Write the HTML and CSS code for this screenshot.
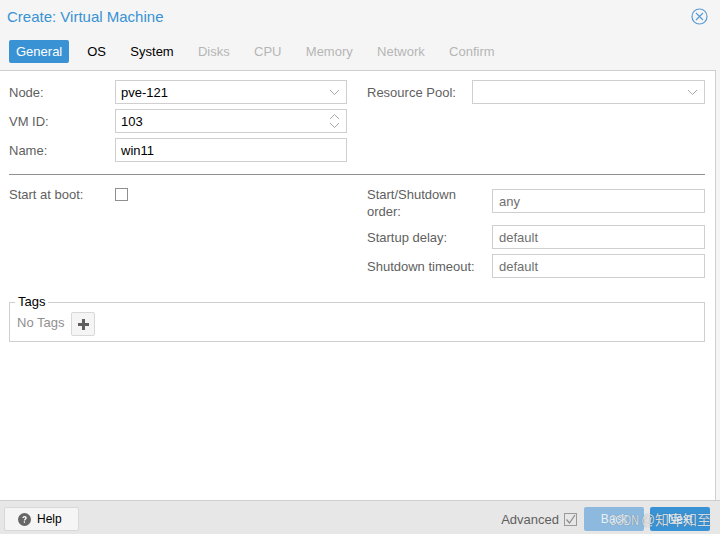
FILE: index.html
```html
<!DOCTYPE html>
<html lang="en">
  <head>
    <meta charset="UTF-8" />
    <meta name="viewport" content="width=device-width, initial-scale=1.0" />
    <title>Create: Virtual Machine</title>
    <link rel="stylesheet" href="styles.css">
  </head>
  <body>
    <div class="window">
      <div class="window-head">
        <div class="title-row">
          <span class="window-title">Create: Virtual Machine</span>
          <svg class="close-icon" width="17" height="17" viewBox="0 0 17 17" fill="none" stroke="#5b9bd5">
            <circle cx="8.5" cy="8.5" r="7.5" stroke-width="1.2"/>
            <path d="M5 5l7 7M12 5l-7 7" stroke-width="1.2"/>
          </svg>
        </div>
        <div class="tabs">
          <span class="tab active">General</span>
          <span class="tab">OS</span>
          <span class="tab">System</span>
          <span class="tab disabled">Disks</span>
          <span class="tab disabled">CPU</span>
          <span class="tab disabled">Memory</span>
          <span class="tab disabled">Network</span>
          <span class="tab disabled">Confirm</span>
        </div>
      </div>

      <div class="window-body">
        <div class="form-top">
          <div class="form-col">
            <div class="field">
              <label class="field-label">Node:</label>
              <div class="input">
                <span>pve-121</span>
                <svg class="chevron" width="11" height="7" viewBox="0 0 11 7" fill="none" stroke="#a8a8a8"><path d="M1 1l4.5 4.5L10 1"/></svg>
              </div>
            </div>
            <div class="field">
              <label class="field-label">VM ID:</label>
              <div class="input">
                <span>103</span>
                <svg class="spinner" width="11" height="16" viewBox="0 0 11 16" fill="none" stroke="#a8a8a8"><path d="M1 6l4.5-4.5L10 6M1 10l4.5 4.5L10 10"/></svg>
              </div>
            </div>
            <div class="field">
              <label class="field-label">Name:</label>
              <div class="input"><span>win11</span></div>
            </div>
          </div>
          <div class="form-col">
            <div class="field">
              <label class="field-label">Resource Pool:</label>
              <div class="input">
                <span></span>
                <svg class="chevron" width="11" height="7" viewBox="0 0 11 7" fill="none" stroke="#a8a8a8"><path d="M1 1l4.5 4.5L10 1"/></svg>
              </div>
            </div>
          </div>
        </div>

        <div class="divider"></div>

        <div class="form-bottom">
          <div class="form-col">
            <div class="field boot-field">
              <label class="field-label">Start at boot:</label>
              <span class="checkbox"></span>
            </div>
          </div>
          <div class="form-col">
            <div class="field order-field">
              <label class="field-label wrap">Start/Shutdown order:</label>
              <div class="input placeholder"><span>any</span></div>
            </div>
            <div class="field">
              <label class="field-label">Startup delay:</label>
              <div class="input placeholder"><span>default</span></div>
            </div>
            <div class="field">
              <label class="field-label">Shutdown timeout:</label>
              <div class="input placeholder"><span>default</span></div>
            </div>
          </div>
        </div>

        <div class="tags-box">
          <span class="tags-legend">Tags</span>
          <span class="no-tags">No Tags</span>
          <span class="add-btn">
            <svg width="11" height="11" viewBox="0 0 11 11" fill="#5f5f5f"><path d="M4 0h3v4h4v3H7v4H4V7H0V4h4z"/></svg>
          </span>
        </div>
      </div>

      <div class="toolbar">
        <span class="help-btn">
          <svg width="13" height="13" viewBox="0 0 13 13">
            <circle cx="6.5" cy="6.5" r="6.5" fill="#666"/>
            <path d="M4.4 5.1c0-1.3 1-2 2.2-2s2.1.7 2.1 1.8c0 1.5-1.6 1.5-1.6 2.700H5.800c0-1.800 1.500-1.900 1.500-2.700 0-.4-.3-.7-.8-.7s-.8.3-.8.900z" fill="#fff"/>
            <rect x="5.800" y="8.400" width="1.300" height="1.400" fill="#fff"/>
          </svg>
          Help
        </span>
        <div class="toolbar-right">
          <span class="advanced-label">Advanced</span>
          <span class="checkbox checked">
            <svg width="13" height="13" viewBox="0 0 13 13" fill="none" stroke="#8a8a8a" stroke-width="1.200"><path d="M2.500 6.500l3 3.500 5.500-8"/></svg>
          </span>
          <span class="wiz-btn back">Back</span>
          <span class="wiz-btn next">Next</span>
        </div>
      </div>

      <span class="watermark"><span class="watermark-latin">CSDN</span> @知卑知至</span>
    </div>
  </body>
</html>
```

FILE: styles.css
```css
* {
  box-sizing: border-box;
}

body {
  margin: 0;
  font-family: "Liberation Sans", Arial, sans-serif;
  font-size: 13px;
  color: #000;
  background: #f5f5f5;
}

.window {
  position: relative;
  width: 720px;
  height: 534px;
  display: flex;
  flex-direction: column;
  overflow: hidden;
}

.window-head {
  height: 70px;
  background: #f5f5f5;
  padding: 0 9px 0 7px;
}

.title-row {
  height: 40px;
  display: flex;
  justify-content: space-between;
  align-items: center;
  padding-bottom: 8px;
}

.window-title {
  font-size: 15px;
  color: #3892d4;
}

.close-icon {
  margin-right: 3px;
}

.tabs {
  display: flex;
  padding-left: 2px;
}

.tab {
  height: 23px;
  line-height: 23px;
  padding: 0 6px;
  margin-right: 12.3px;
  border-radius: 2px;
  font-size: 13px;
}

.tab.active {
  padding: 0 7px;
  background: #3892d4;
  color: #fff;
  margin-right: 12px;
}

.tab.disabled {
  color: #b5b5b5;
}

.window-body {
  flex: 1;
  margin-right: 4px;
  background: #fff;
  border-top: 1px solid #cfcfcf;
  border-right: 1px solid #cfcfcf;
  padding: 9px 10px 0 9px;
}

.form-top,
.form-bottom {
  display: grid;
  grid-template-columns: 338px 338px;
  column-gap: 20px;
}

.form-col {
  display: flex;
  flex-direction: column;
  gap: 5px;
}

.field {
  display: flex;
  align-items: center;
  min-height: 24px;
}

.field-label {
  width: 106px;
  flex-shrink: 0;
  color: #5f5f5f;
  line-height: 17px;
}

.form-bottom .form-col + .form-col .field-label {
  width: 125px;
}

.form-top .form-col + .form-col .field-label {
  width: 105px;
}

.field-label.wrap {
  margin-top: -2px;
}

.input {
  flex: 1;
  height: 24px;
  border: 1px solid #cfcfcf;
  background: #fff;
  padding: 0 6px;
  display: flex;
  align-items: center;
  justify-content: space-between;
  font-size: 13px;
  color: #000;
}

.form-top .input {
  padding-left: 5px;
}

.input.placeholder {
  color: #6f6f6f;
}

.divider {
  height: 1px;
  margin-top: 12px;
  background: #909090;
}

.form-bottom {
  margin-top: 13px;
}

.boot-field {
  align-items: flex-start;
}

.boot-field .field-label {
  margin-top: -2px;
}

.order-field {
  height: 32px;
  align-items: flex-start;
}

.order-field .input {
  margin-top: 1px;
}

.checkbox {
  display: block;
  width: 13px;
  height: 13px;
  border: 1px solid #8f8f8f;
  background: #fff;
}

.checkbox.checked {
  background: transparent;
  border-color: #9a9a9a;
  position: relative;
}

.checkbox.checked svg {
  position: absolute;
  left: -1px;
  top: -1px;
}

.tags-box {
  position: relative;
  height: 40px;
  margin-top: 24px;
  border: 1px solid #cfcfcf;
  padding: 9px 7px 0;
  display: flex;
  align-items: flex-start;
  gap: 7px;
}

.tags-legend {
  position: absolute;
  top: -9px;
  left: 5px;
  padding: 0 3px;
  background: #fff;
  line-height: 15px;
  color: #000;
}

.no-tags {
  line-height: 22px;
  color: #8f8f8f;
}

.add-btn {
  width: 24px;
  height: 24px;
  border: 1px solid #d8d8d8;
  border-radius: 2px;
  background: #f5f5f5;
  display: flex;
  align-items: center;
  justify-content: center;
}

.toolbar {
  height: 34px;
  background: #e7e7e7;
  border-top: 1px solid #cfcfcf;
  padding: 6px 10px 0 4px;
  display: flex;
  justify-content: space-between;
}

.help-btn {
  width: 75px;
  height: 24px;
  border: 1px solid #d8d8d8;
  border-radius: 2px;
  background: #f5f5f5;
  font-size: 12px;
  display: flex;
  align-items: center;
  gap: 6px;
  padding-left: 13px;
}

.toolbar-right {
  display: flex;
  align-items: center;
  height: 24px;
}

.advanced-label {
  color: #5f5f5f;
  margin-right: 5px;
}

.wiz-btn {
  width: 60px;
  height: 24px;
  line-height: 24px;
  text-align: center;
  border-radius: 2px;
  color: #fff;
  font-size: 12px;
}

.wiz-btn.back {
  margin-left: 7px;
  margin-right: 6px;
  background: #8cb9dd;
  color: #e6f0f8;
}

.wiz-btn.next {
  background: #3892d4;
}

.watermark {
  position: absolute;
  left: 609px;
  top: 511px;
  font-family: "Liberation Sans", "Noto Sans CJK SC", sans-serif;
  font-size: 14px;
  line-height: 18px;
  color: rgba(255, 255, 255, 0.75);
  text-shadow: 0 0 1px rgba(70, 70, 70, 0.6);
  white-space: nowrap;
}

.watermark-latin {
  display: inline-block;
  width: 28px;
  transform: scaleX(0.75);
  transform-origin: left;
}
```
